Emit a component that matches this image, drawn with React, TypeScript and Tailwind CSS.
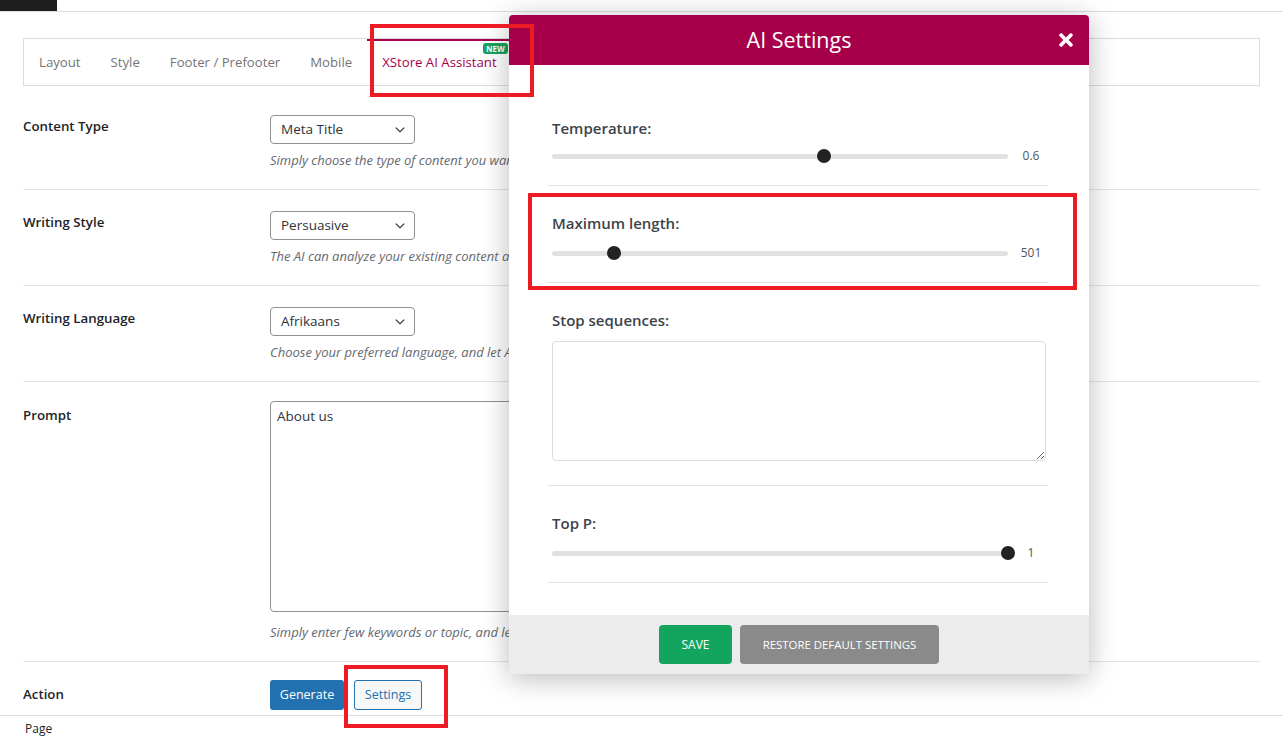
import type { ReactNode } from 'react'

const tabs = ['Layout', 'Style', 'Footer / Prefooter', 'Mobile', 'XStore AI Assistant']

function Chevron() {
  return (
    <svg width="14" height="14" viewBox="0 0 20 20" className="shrink-0">
      <path d="M5 6l5 5 5-5 2 1-7 7-7-7 2-1z" fill="#50575e" />
    </svg>
  )
}

function Select({ value }: { value: string }) {
  return (
    <div className="w-[145px] h-[29px] border border-[#8c8f94] rounded-[4px] bg-white flex items-center justify-between pl-[10px] pr-[7px] text-[13.5px] text-[#2c3338]">
      <span>{value}</span>
      <Chevron />
    </div>
  )
}

function Row({ label, children, className }: { label: string; children: ReactNode; className: string }) {
  return (
    <div className={`grid grid-cols-[247px_1fr] border-b border-[#e4e4e7] ${className}`}>
      <div className="pt-[22px] text-[13.3px] font-semibold leading-[20px] text-[#1d2327]">{label}</div>
      <div className="pt-[21px]">{children}</div>
    </div>
  )
}

function Desc({ children }: { children: ReactNode }) {
  return <p className="mt-[7px] text-[13px] italic leading-[19px] text-[#646970] whitespace-nowrap">{children}</p>
}

function Slider({ pct, value }: { pct: number; value: string }) {
  return (
    <div className="flex items-center h-[20px]">
      <div className="relative flex-1 h-[5px] rounded-full bg-[#e1e1e1]">
        <div
          className="absolute top-1/2 -translate-y-1/2 w-[14px] h-[14px] rounded-full bg-[#222]"
          style={{ left: `calc(${pct}% - 7px)` }}
        />
      </div>
      <div className="w-[36px] pl-[10px] text-center text-[12px] text-[#50575e]">{value}</div>
    </div>
  )
}

function Label({ children }: { children: ReactNode }) {
  return <div className="text-[15px] font-semibold leading-[20px] text-[#3c434a]">{children}</div>
}

function SettingsModal() {
  return (
    <div className="absolute left-[509px] top-[15px] w-[580px] h-[659px] flex flex-col rounded-[4px] overflow-hidden bg-white shadow-[0_4px_28px_rgba(0,0,0,0.28)]">
      {/* header */}
      <div className="relative h-[50px] shrink-0 bg-[#a6004b] flex items-center justify-center">
        <span className="text-[21.5px] text-white">AI Settings</span>
        <svg width="14" height="20" viewBox="0 0 352 512" className="absolute right-[16px] top-[15px]">
          <path
            fill="#fff"
            d="M242.72 256l100.07-100.07c12.28-12.28 12.28-32.19 0-44.48l-22.24-22.24c-12.28-12.28-32.19-12.28-44.48 0L176 189.28 75.93 89.21c-12.28-12.28-32.19-12.28-44.48 0L9.21 111.45c-12.28 12.28-12.28 32.19 0 44.48L109.28 256 9.21 356.07c-12.28 12.28-12.28 32.19 0 44.48l22.24 22.24c12.28 12.28 32.2 12.28 44.48 0L176 322.72l100.07 100.07c12.28 12.28 32.2 12.28 44.48 0l22.24-22.24c12.28-12.28 12.28-32.19 0-44.48L242.72 256z"
          />
        </svg>
      </div>

      {/* body */}
      <div className="flex-1 overflow-hidden pl-[39px] pr-[41px] pt-[26px]">
        <div className="border-b border-[#e2e2e2] pt-[27px] pb-[19px] px-[4px]">
          <Label>Temperature:</Label>
          <div className="mt-[8px]">
            <Slider pct={59.6} value="0.6" />
          </div>
        </div>
        <div className="border-b border-[#e2e2e2] pt-[27px] pb-[19px] px-[4px]">
          <Label>Maximum length:</Label>
          <div className="mt-[10px]">
            <Slider pct={13.6} value="501" />
          </div>
        </div>
        <div className="border-b border-[#e2e2e2] pt-[27px] pb-[24px] px-[4px]">
          <Label>Stop sequences:</Label>
          <textarea className="mt-[11px] block w-[494px] h-[120px] border border-[#dcdcde] rounded-[4px] outline-none" />
        </div>
        <div className="border-b border-[#e2e2e2] pt-[27px] pb-[19px] px-[4px]">
          <Label>Top P:</Label>
          <div className="mt-[10px]">
            <Slider pct={100} value="1" />
          </div>
        </div>
        <div className="pt-[27px] px-[4px] h-[32px] overflow-hidden">
          <Label>Frequency penalty:</Label>
        </div>
      </div>

      {/* footer */}
      <div className="h-[59px] shrink-0 bg-[#ececec] flex items-center justify-center gap-[8px]">
        <button className="h-[39px] w-[73px] rounded-[4px] bg-[#13a55e] text-white text-[12px] uppercase">Save</button>
        <button className="h-[39px] w-[199px] rounded-[4px] bg-[#8a8a8a] text-white text-[11.4px] uppercase">
          Restore default settings
        </button>
      </div>
    </div>
  )
}

export default function App() {
  return (
    <div className="relative h-[737px] overflow-hidden bg-white font-['Open_Sans',sans-serif] text-[#1d2327]">
      {/* admin bar strip */}
      <div className="flex h-[12px] border-b border-[#dcdcde]">
        <div className="w-[57px] bg-[#1e1e1e]" />
      </div>

      <div className="px-[23px] pt-[26px]">
        {/* tabs */}
        <div className="flex h-[48px] border border-[#dcdcde] bg-white">
          {tabs.map((t, i) => {
            const active = i === tabs.length - 1
            return (
              <div
                key={t}
                className={`relative flex items-center px-[15px] pt-[1px] text-[13.2px] ${
                  active ? 'text-[#a6004b] shadow-[inset_0_2px_0_#a6004b]' : 'text-[#757575]'
                }`}
              >
                {t}
                {active && (
                  <span className="absolute top-[4px] right-[4px] rounded-[3px] bg-[#1aa15d] px-[3px] text-[8px] font-bold leading-[11px] text-white">
                    NEW
                  </span>
                )}
              </div>
            )
          })}
        </div>

        {/* form */}
        <div className="mt-[8px]">
          <Row label="Content Type" className="h-[96px]">
            <Select value="Meta Title" />
            <Desc>Simply choose the type of content you want to generate, and let AI do the rest.</Desc>
          </Row>
          <Row label="Writing Style" className="h-[96px]">
            <Select value="Persuasive" />
            <Desc>The AI can analyze your existing content and write new text in the same style.</Desc>
          </Row>
          <Row label="Writing Language" className="h-[96px]">
            <Select value="Afrikaans" />
            <Desc>Choose your preferred language, and let AI write the content in it.</Desc>
          </Row>
          <div className="grid grid-cols-[247px_1fr] h-[280px] border-b border-[#e4e4e7]">
            <div className="pt-[23px] text-[13.3px] font-semibold leading-[20px]">Prompt</div>
            <div className="pt-[19px]">
              <textarea
                defaultValue="About us"
                className="block w-[640px] h-[211px] border border-[#8c8f94] rounded-[4px] px-[6px] py-[4px] text-[13.5px] text-[#2c3338] outline-none resize-none"
              />
              <p className="mt-[11px] text-[13px] italic leading-[19px] text-[#646970] whitespace-nowrap">
                Simply enter few keywords or topic, and let AI generate the content for you.
              </p>
            </div>
          </div>
          <div className="grid grid-cols-[247px_1fr] h-[53px] overflow-hidden">
            <div className="pt-[22px] text-[13.3px] font-semibold leading-[20px]">Action</div>
            <div className="pt-[18px] flex items-start gap-[10px]">
              <button className="h-[30px] w-[74px] rounded-[3px] bg-[#2271b1] text-white text-[12.5px]">Generate</button>
              <button className="h-[30px] w-[68px] rounded-[3px] border border-[#2271b1] bg-[#f6f7f7] text-[#2271b1] text-[12.5px]">
                Settings
              </button>
            </div>
          </div>
        </div>
      </div>

      <div className="border-t border-[#dcdcde] px-[25px] pt-[4px] text-[12px] text-[#1d2327]">Page</div>

      <SettingsModal />

      {/* annotation boxes */}
      <div className="absolute left-[370px] top-[24px] w-[164px] h-[73px] border-[4px] border-[#ed1c24]" />
      <div className="absolute left-[528px] top-[193px] w-[549px] h-[97px] border-[4px] border-[#ed1c24]" />
      <div className="absolute left-[344px] top-[665px] w-[104px] h-[63px] border-[4px] border-[#ed1c24]" />
    </div>
  )
}
